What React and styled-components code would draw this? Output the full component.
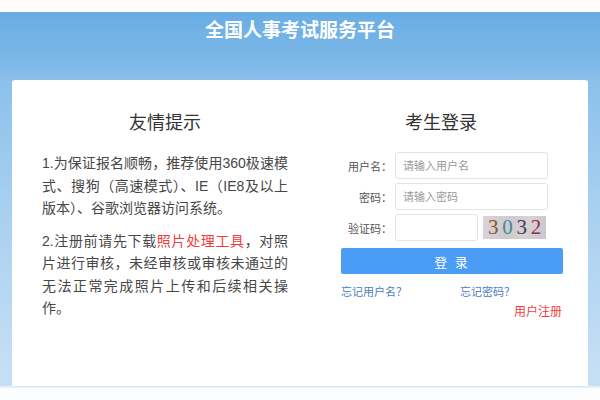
import React from 'react'
import styled, { createGlobalStyle } from 'styled-components'

const GlobalStyle = createGlobalStyle`
  body {
    margin: 0;
    font-family: "Liberation Sans", "Noto Sans CJK SC", sans-serif;
    background: #fff;
  }
`;

const Page = styled.div`
  width: 600px;
  height: 400px;
  overflow: hidden;
  background: #fff;
`;

const TopStrip = styled.div`
  height: 12px;
  background: #fffdf8;
`;

const Hero = styled.div`
  height: 374px;
  padding: 0 12px;
  box-sizing: border-box;
  background: linear-gradient(180deg, #69ade5 0px, #7db8e8 50px, #8cc1eb 70px, #a9d0f0 200px, #c7e0f5 374px);
  display: flex;
  flex-direction: column;
`;

const SiteTitle = styled.h1`
  margin: 0;
  height: 68px;
  line-height: 37px;
  text-align: center;
  color: #fff;
  font-size: 19px;
  font-weight: bold;
`;

const Card = styled.div`
  flex: 1;
  background: #fff;
  border-radius: 3px 3px 0 0;
  display: flex;
  padding: 33px 25px 0 30px;
  box-shadow: 0 1px 0 #dbe8f5;
`;

const Bottom = styled.div`
  height: 14px;
  border-top: 2px solid #e6f0f9;
  box-sizing: border-box;
  background: #fbfdff;
`;

const Tips = styled.div`
  width: 246px;
`;

const Heading = styled.h2`
  margin: 0 0 19px;
  font-size: 18px;
  line-height: 20px;
  font-weight: normal;
  color: #333;
  text-align: center;
  padding-right: ${p => p.$shift || 0}px;
`;

const Para = styled.p`
  margin: 0 0 10px;
  font-size: 14px;
  line-height: 22.5px;
  color: #474747;
  text-align: justify;
`;

const Red = styled.span`
  color: #f43b3b;
`;

const Login = styled.div`
  width: 222px;
  margin-left: 53px;
`;

const Row = styled.div`
  display: flex;
  align-items: center;
  height: 27px;
  margin-bottom: 4px;
`;

const Label = styled.label`
  width: 51px;
  text-align: right;
  font-size: 11px;
  color: #555;
  margin-right: 3px;
  white-space: nowrap;
`;

const Input = styled.input`
  box-sizing: border-box;
  width: ${p => p.$w}px;
  height: 27px;
  border: 1px solid #e4e4e4;
  border-radius: 3px;
  padding: 0 7px;
  font-size: 11px;
  font-family: inherit;
  outline: none;
  &::placeholder {
    color: #9a9a9a;
  }
`;

const Captcha = styled.div`
  width: 63px;
  height: 23px;
  margin-left: 5px;
  display: flex;
  align-items: center;
  justify-content: space-around;
  padding: 0 3px;
  box-sizing: border-box;
  background: linear-gradient(100deg, #dcd3d6, #cfc9cf 40%, #d8d0d4 70%, #cbc6cc);
  font-family: "Liberation Serif", serif;
  font-size: 21px;
  line-height: 23px;
`;

const Digit = styled.span`
  color: ${p => p.$c};
`;

const Button = styled.button`
  display: block;
  width: 222px;
  height: 26px;
  margin-top: 7px;
  border: 0;
  border-radius: 2px;
  background: #4a9cf4;
  color: #fff;
  font-size: 13px;
  font-family: inherit;
  letter-spacing: 2px;
`;

const Links = styled.div`
  display: flex;
  margin-top: 10px;
  line-height: 16px;
  font-size: 11px;
`;

const Link = styled.a`
  color: ${p => p.$red ? '#f23c3c' : '#4a80bd'};
  text-decoration: none;
  width: ${p => p.$w ? p.$w + 'px' : 'auto'};
`;

const RegisterRow = styled.div`
  margin-top: 4px;
  text-align: right;
  font-size: 12px;
  line-height: 16px;
  padding-right: 1px;
`;

export default function App() {
  return (
    <Page>
      <GlobalStyle />
      <TopStrip />
      <Hero>
        <SiteTitle>全国人事考试服务平台</SiteTitle>
        <Card>
          <Tips>
            <Heading>友情提示</Heading>
            <Para>1.为保证报名顺畅，推荐使用360极速模式、搜狗（高速模式）、IE（IE8及以上版本）、谷歌浏览器访问系统。</Para>
            <Para>2.注册前请先下载<Red>照片处理工具</Red>，对照片进行审核，未经审核或审核未通过的无法正常完成照片上传和后续相关操作。</Para>
          </Tips>
          <Login>
            <Heading $shift={22}>考生登录</Heading>
            <Row>
              <Label>用户名：</Label>
              <Input $w={153} placeholder="请输入用户名" />
            </Row>
            <Row>
              <Label>密码：</Label>
              <Input $w={153} type="password" placeholder="请输入密码" />
            </Row>
            <Row>
              <Label>验证码：</Label>
              <Input $w={83} />
              <Captcha>
                <Digit $c="#7a5c34">3</Digit>
                <Digit $c="#3f8d95">0</Digit>
                <Digit $c="#3a4358">3</Digit>
                <Digit $c="#8b2c50">2</Digit>
              </Captcha>
            </Row>
            <Button>登 录</Button>
            <Links>
              <Link $w={119} href="#">忘记用户名？</Link>
              <Link href="#">忘记密码？</Link>
            </Links>
            <RegisterRow>
              <Link $red href="#">用户注册</Link>
            </RegisterRow>
          </Login>
        </Card>
      </Hero>
      <Bottom />
    </Page>
  )
}
